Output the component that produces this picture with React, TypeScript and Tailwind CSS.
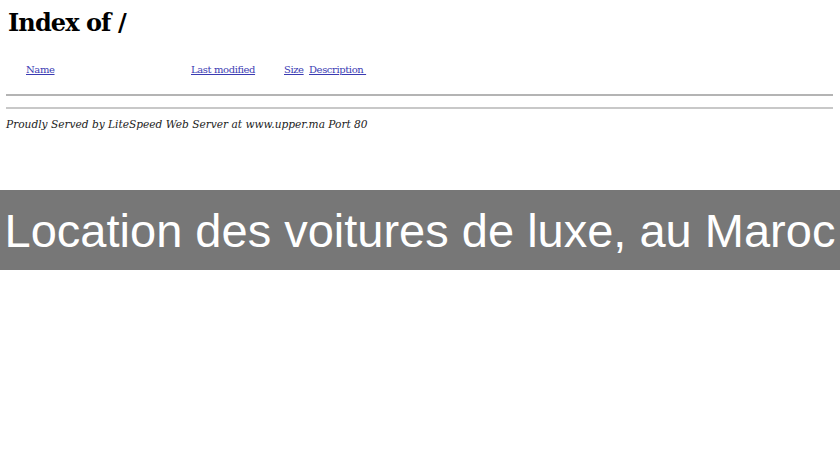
import React from 'react';

const serif = { fontFamily: '"DejaVu Serif", serif' };

const App = () => {
  return (
    <div className="w-[840px] h-[460px] bg-white overflow-hidden">
      {/* Directory listing */}
      <div className="h-[190px] px-[6px] pt-[6px]" style={serif}>
        <h1 className="text-[24px] leading-[34px] font-bold text-black pl-[2px] tracking-[-0.9px]">Index of /</h1>
        <div className="flex items-end pl-[20px] mt-[23px] text-[10px] leading-[14px] text-[#3b3bb3] tracking-[-0.4px]">
          <a href="#" className="underline w-[165px]">Name</a>
          <a href="#" className="underline w-[93px]">Last modified</a>
          <a href="#" className="underline w-[25px]">Size</a>
          <a href="#" className="underline">Description&nbsp;</a>
        </div>
        <div className="mt-[17px] h-[2px] w-[827px] bg-[#b4b4b4]" />
        <div className="mt-[11px] h-[2px] w-[827px] bg-[#c8c8c8]" />
        <p className="mt-[7px] text-[10.6px] leading-[16px] italic text-[#222]">
          Proudly Served by LiteSpeed Web Server at www.upper.ma Port 80
        </p>
      </div>

      {/* Banner */}
      <div
        className="h-[80px] bg-[#777777] flex items-center justify-center text-white text-[47px] leading-none"
        style={{ fontFamily: '"Liberation Sans", Arial, sans-serif' }}
      >
        Location des voitures de luxe, au Maroc
      </div>
    </div>
  );
};

export default App;
